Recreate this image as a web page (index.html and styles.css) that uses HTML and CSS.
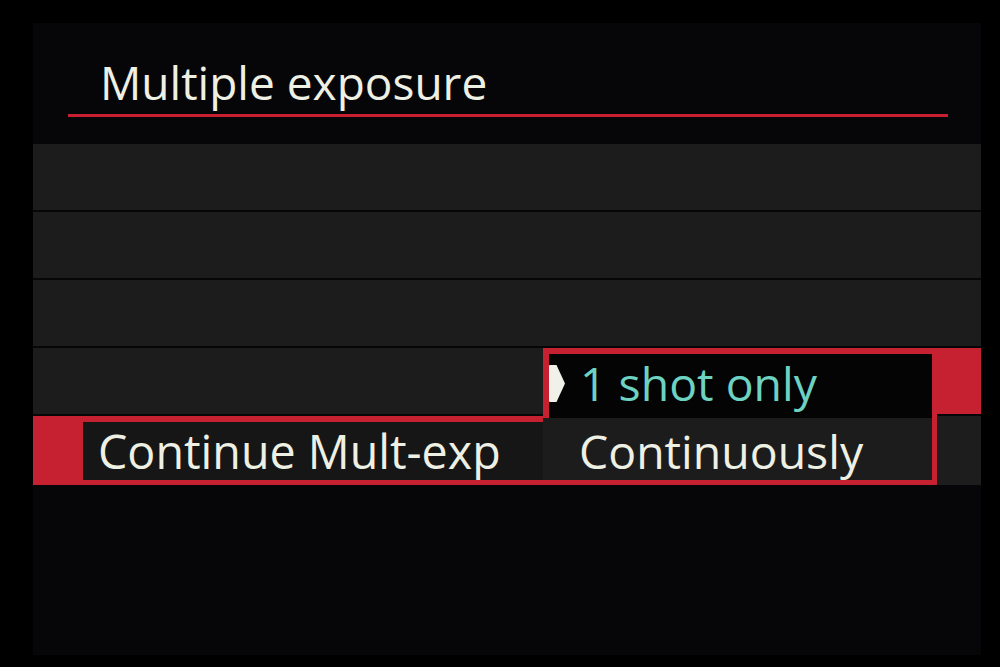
FILE: index.html
```html
<!DOCTYPE html>
<html lang="en">
<head>
<meta charset="utf-8">
<title>Multiple exposure</title>
<link rel="stylesheet" href="styles.css">
</head>
<body>
<div class="screen">
  <div class="header">
    <h1 class="title">Multiple exposure</h1>
  </div>
  <div class="list">
    <div class="row"></div>
    <div class="row"></div>
    <div class="row"></div>
    <div class="row">
      <div class="fill"></div>
      <div class="tail tail-red"></div>
    </div>
    <div class="row row-sel">
      <div class="sel">
        <div class="sel-inner">Continue Mult-exp</div>
        <div class="popup">
          <div class="opt opt-active">
            <svg class="marker" width="16" height="37" viewBox="0 0 16 37"><path d="M1 0 H7.5 L16 18.5 L7.5 37 H1 Q0 37 0 36 V1 Q0 0 1 0 Z" fill="#f1f1ea"/></svg>
            <span class="opt-text teal">1 shot only</span>
          </div>
          <div class="opt opt-plain">
            <span class="opt-text">Continuously</span>
          </div>
        </div>
      </div>
      <div class="tail tail-grey"></div>
    </div>
  </div>
</div>
</body>
</html>
```

FILE: styles.css
```css
html, body {
  margin: 0;
  padding: 0;
  background: #000;
}

body {
  width: 1000px;
  height: 667px;
  overflow: hidden;
  font-family: "Open Sans", "Noto Sans", "DejaVu Sans", sans-serif;
  color: #eef0e4;
}

.screen {
  margin-left: 33px;
  margin-top: 23px;
  width: 948px;
  height: 632px;
  background: #060609;
}

.header {
  margin-left: 35px;
  width: 880px;
  padding-top: 28px;
  border-bottom: 3px solid #c71f31;
}

.title {
  margin: 0;
  padding-left: 32px;
  font-size: 46px;
  font-weight: 400;
  line-height: 63px;
  height: 63px;
  color: #eef0e4;
}

.list {
  margin-top: 27px;
  display: flex;
  flex-direction: column;
  gap: 2px;
}

.row {
  height: 66px;
  background: #1c1c1c;
  display: flex;
}

.fill {
  flex: 1;
}

.tail {
  width: 44px;
  flex: none;
}

.tail-red {
  background: #c52131;
}

.tail-grey {
  background: #1d1d1d;
}

.row-sel {
  height: 69px;
  background: #060609;
}

.sel {
  position: relative;
  flex: 1;
  background: #c52131;
  padding: 6px 5px 5px 50px;
  display: flex;
}

.sel-inner {
  flex: 1;
  background: #161616;
  padding-left: 15px;
  font-size: 46.6px;
  line-height: 58px;
  white-space: nowrap;
}

.popup {
  position: absolute;
  left: 510px;
  bottom: 5px;
  width: 394px;
  display: flex;
  flex-direction: column;
}

.opt {
  display: flex;
  align-items: flex-start;
  font-size: 46.4px;
  line-height: 58px;
  white-space: nowrap;
}

.opt-active {
  height: 64px;
  background: #040404;
  border-top: 6px solid #c52131;
  border-left: 6px solid #c52131;
  border-right: 5px solid #c52131;
}

.marker {
  margin-top: 11px;
  margin-right: 15px;
  flex: none;
}

.teal {
  color: #6dd2c1;
}

.opt-plain {
  height: 62px;
  background: #1c1c1c;
  border-right: 5px solid #c52131;
  padding-left: 36px;
  align-items: flex-end;
}
```
